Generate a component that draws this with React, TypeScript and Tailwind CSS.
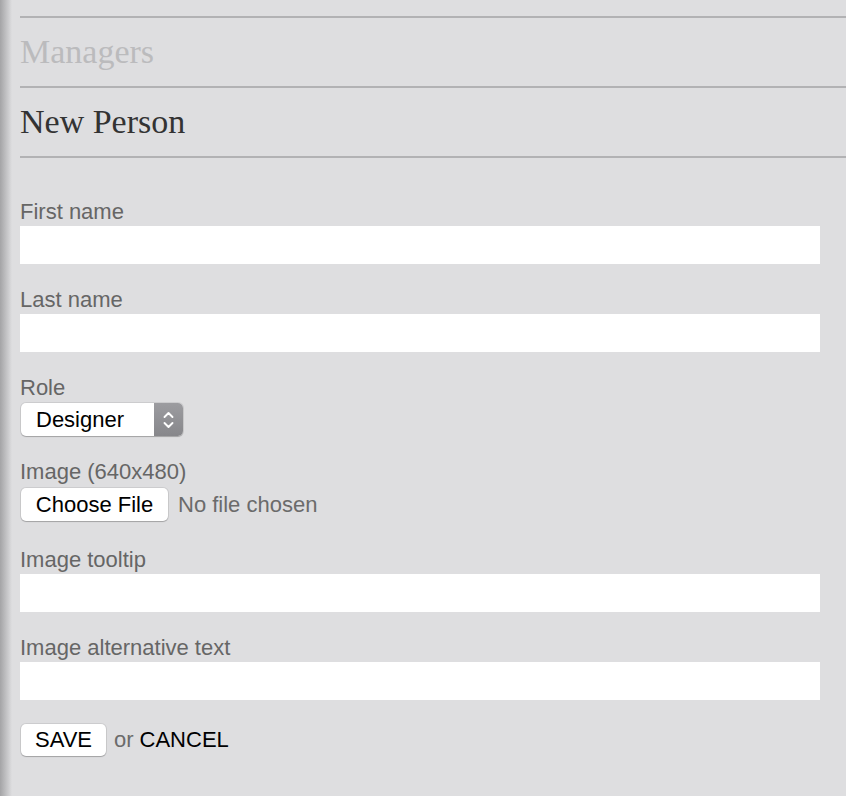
import * as React from "react";

const fields = [
  { label: "First name", type: "text" },
  { label: "Last name", type: "text" },
];

const moreFields = [
  { label: "Image tooltip" },
  { label: "Image alternative text" },
];

function Label({ children }: { children: React.ReactNode }) {
  return <label className="block h-[26px] text-[22px] leading-[26px] text-[#666666]">{children}</label>;
}

function TextField({ label }: { label: string }) {
  return (
    <div className="mb-[23px]">
      <Label>{label}</Label>
      <input type="text" className="mt-[1px] block h-[38px] w-[800px] bg-white outline-none" />
    </div>
  );
}

function Chevrons() {
  return (
    <svg width="13" height="22" viewBox="0 0 13 22" fill="none" stroke="white" strokeWidth="1.9" strokeLinecap="round" strokeLinejoin="round">
      <path d="M2.5 8 L6.5 4 L10.5 8" />
      <path d="M2.5 14 L6.5 18 L10.5 14" />
    </svg>
  );
}

export default function App() {
  return (
    <div className="relative min-h-[796px] w-[846px] bg-[#dedee0] font-['Liberation_Sans',Arial,sans-serif]">
      {/* left edge shadow */}
      <div className="absolute left-0 top-0 h-full w-[12px] bg-gradient-to-r from-[#a4a4a6] to-[#dedee0]" />

      <div className="relative pl-5 pt-4">
        <div className="border-t-2 border-[#b2b2b4] py-[17px]">
          <h2 className="font-['Liberation_Serif','Times_New_Roman',serif] text-[34px] leading-[34px] text-[#bbbbbd]">Managers</h2>
        </div>
        <div className="border-t-2 border-[#b2b2b4] py-[17px]">
          <h1 className="font-['Liberation_Serif','Times_New_Roman',serif] text-[34px] leading-[34px] text-[#333333]">New Person</h1>
        </div>

        <form className="border-t-2 border-[#b2b2b4] pt-[41px]">
          {fields.map((f) => (
            <TextField key={f.label} label={f.label} />
          ))}

          <div className="mb-[23px]">
            <Label>Role</Label>
            <div className="ml-[1px] mt-[2px] flex h-[33px] w-[162px] overflow-hidden rounded-[5px] bg-white shadow-[0_0_0_1px_rgba(0,0,0,0.08),0_1px_1px_rgba(0,0,0,0.2)]">
              <span className="flex-1 pl-[15px] text-[22px] leading-[33px] text-black">Designer</span>
              <span className="flex w-[29px] items-center justify-center bg-gradient-to-b from-[#9c9ca0] to-[#87878b]">
                <Chevrons />
              </span>
            </div>
          </div>

          <div className="mb-[26px]">
            <Label>Image (640x480)</Label>
            <div className="mt-[3px] flex items-center">
              <button type="button" className="ml-[1px] h-[33px] w-[147px] rounded-[5px] bg-white text-[22px] leading-[33px] text-black shadow-[0_0_0_1px_rgba(0,0,0,0.08),0_1px_1px_rgba(0,0,0,0.2)]">
                Choose File
              </button>
              <span className="ml-[10px] text-[22px] text-[#6b6b6b]">No file chosen</span>
            </div>
          </div>

          {moreFields.map((f) => (
            <TextField key={f.label} label={f.label} />
          ))}

          <div className="flex items-center">
            <button type="button" className="ml-[1px] h-[32px] w-[85px] rounded-[5px] bg-white text-[22px] leading-[32px] text-black shadow-[0_0_0_1px_rgba(0,0,0,0.08),0_1px_1px_rgba(0,0,0,0.2)]">
              SAVE
            </button>
            <span className="ml-[8px] text-[22px] text-[#6b6b6b]">or</span>
            <a href="#" className="ml-[6px] text-[22px] text-black">CANCEL</a>
          </div>
        </form>
      </div>
    </div>
  );
}
